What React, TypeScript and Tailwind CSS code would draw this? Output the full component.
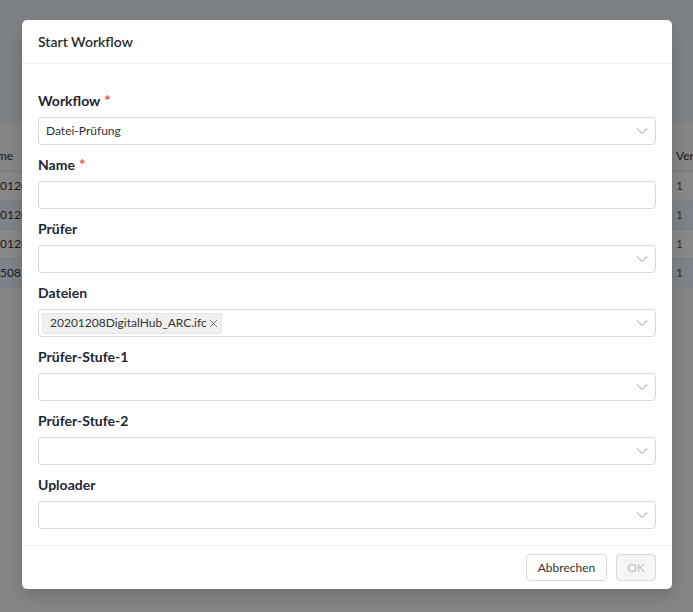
import React from "react";

const font = { fontFamily: '"Segoe UI", Lato, "Open Sans", sans-serif' };

function Chevron() {
  return (
    <svg width="12" height="8" viewBox="0 0 12 8" className="shrink-0">
      <path d="M1 1.5 L6 6.5 L11 1.5" fill="none" stroke="#bfbfbf" strokeWidth="1.1" />
    </svg>
  );
}

function Label({ text, required }: { text: string; required?: boolean }) {
  return (
    <div className="h-[22px] mb-[5px] flex items-center text-[14px] font-bold text-[#1f2633] leading-none">
      <span>{text}</span>
      {required && <span className="ml-[4px] text-[#f0504f] text-[15px] -mt-[2px]">*</span>}
    </div>
  );
}

function Field({
  label,
  required,
  select = true,
  children,
}: {
  label: string;
  required?: boolean;
  select?: boolean;
  children?: React.ReactNode;
}) {
  return (
    <div className="mb-[9px]">
      <Label text={label} required={required} />
      <div className="h-[28px] rounded-[4px] border border-[#d9d9d9] bg-white flex items-center pl-[3px] pr-[7px]">
        <div className="flex-1 flex items-center min-w-0">{children}</div>
        {select && <Chevron />}
      </div>
    </div>
  );
}

export default function App() {
  const rows = ["0120", "0120", "0120", "508"];
  return (
    <div className="relative w-[693px] h-[612px] overflow-hidden bg-[#858585]" style={font}>
      {/* background page (dimmed) */}
      <div className="h-[123px] bg-[#7f8285]" />
      <div className="h-[49px] bg-[#858585] border-b border-[#7a7a7a] flex items-end pb-[6px] text-[12px] text-[#1a1a1a]">
        <div className="flex-1 -ml-[18px]">Name</div>
        <div className="w-[17px] text-[#1a1a1a]">Ver</div>
      </div>
      {rows.map((r, i) => (
        <div
          key={i}
          className={`h-[29px] flex items-center text-[12px] border-b border-[#7c7c7c] ${
            i % 2 === 0 ? "bg-[#888888]" : "bg-[#7d8389]"
          }`}
        >
          <div className="flex-1 text-[#1a1a1a]">{r}</div>
          <div className="w-[17px] text-[#4a1f1f]">1</div>
        </div>
      ))}

      {/* modal */}
      <div className="absolute left-[22px] top-[20px] w-[650px] h-[569px] bg-white rounded-[5px] shadow-[0_6px_16px_rgba(0,0,0,0.18)] flex flex-col">
        <div className="h-[44px] px-[16px] flex items-center border-b border-[#f0f0f0] text-[14px] font-semibold text-[#2b2b2b]">
          Start Workflow
        </div>
        <div className="flex-1 px-[16px] pt-[26px]">
          <Field label="Workflow" required>
            <span className="pl-[4px] text-[12px] text-[#333]">Datei-Prüfung</span>
          </Field>
          <Field label="Name" required select={false} />
          <Field label="Prüfer" />
          <Field label="Dateien">
            <span className="h-[21px] flex items-center gap-[2px] rounded-[2px] bg-[#f0f0f0] border border-[#e6e6e6] pl-[7px] pr-[3px] text-[12px] text-[#333]">
              20201208DigitalHub_ARC.ifc
              <svg width="9" height="9" viewBox="0 0 9 9">
                <path d="M1 1 L8 8 M8 1 L1 8" stroke="#777" strokeWidth="1" />
              </svg>
            </span>
          </Field>
          <Field label="Prüfer-Stufe-1" />
          <Field label="Prüfer-Stufe-2" />
          <Field label="Uploader" />
        </div>
        <div className="h-[44px] border-t border-[#f0f0f0] flex items-center justify-end gap-[9px] px-[16px]">
          <button className="h-[27px] w-[81px] rounded-[4px] border border-[#d9d9d9] bg-white text-[12px] text-[#333]">
            Abbrechen
          </button>
          <button className="h-[27px] w-[40px] rounded-[4px] border border-[#d9d9d9] bg-[#f5f5f5] text-[12px] text-[#bfbfbf]">
            OK
          </button>
        </div>
      </div>
    </div>
  );
}
